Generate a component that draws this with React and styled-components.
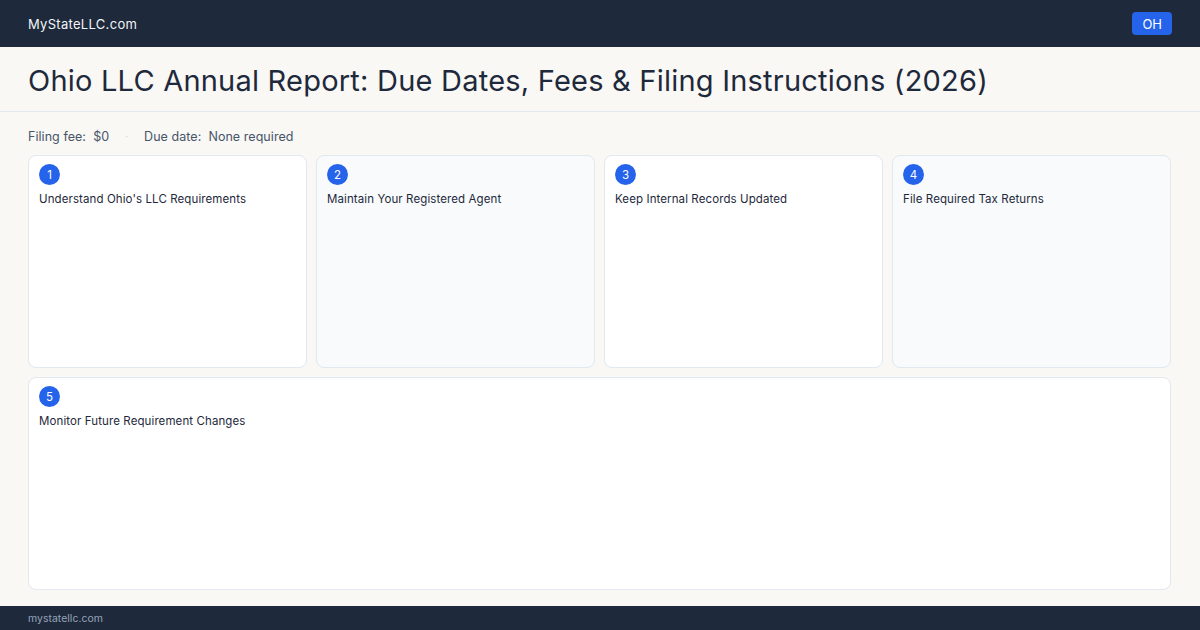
import styled, { createGlobalStyle } from "styled-components";

const Global = createGlobalStyle`
  * { box-sizing: border-box; }
  html, body { margin: 0; padding: 0; }
  body {
    font-family: Inter, "Noto Sans", sans-serif;
    background: #f9f8f5;
    color: #1e293b;
  }
`;

const Page = styled.div`
  width: 1200px;
  height: 630px;
  display: flex;
  flex-direction: column;
  overflow: hidden;
`;

const TopBar = styled.header`
  height: 47px;
  flex-shrink: 0;
  background: #1e293b;
  display: flex;
  align-items: center;
  justify-content: space-between;
  padding: 0 28px;
`;

const Brand = styled.div`
  color: #f1f5f9;
  font-size: 13px;
  letter-spacing: 0.3px;
`;

const StateBadge = styled.div`
  background: #2563eb;
  color: #fff;
  font-size: 13px;
  height: 23px;
  padding: 0 10px;
  border-radius: 4px;
  display: flex;
  align-items: center;
`;

const TitleBand = styled.div`
  height: 65px;
  flex-shrink: 0;
  border-bottom: 1px solid #e2e8f0;
  display: flex;
  align-items: center;
  padding: 3px 28px 0;
`;

const Title = styled.h1`
  margin: 0;
  font-size: 29px;
  font-weight: 400;
  letter-spacing: 0.22px;
  color: #1e293b;
`;

const Main = styled.main`
  flex: 1;
  display: flex;
  flex-direction: column;
  gap: 10px;
  padding: 15px 28px 16px;
  min-height: 0;
`;

const Meta = styled.div`
  display: flex;
  align-items: center;
  gap: 16px;
  font-size: 12.5px;
  letter-spacing: 0.05px;
  color: #475569;
  height: 18px;
`;

const Sep = styled.span`
  color: #cbd5e1;
  font-size: 10px;
`;

const Grid = styled.div`
  flex: 1;
  display: grid;
  grid-template-columns: repeat(4, 279px);
  grid-template-rows: 1fr 1fr;
  gap: 9px;
  min-height: 0;
`;

const Card = styled.div`
  background: ${(p) => (p.$alt ? "#f8fafc" : "#ffffff")};
  border: 1px solid #e2e8f0;
  border-radius: 8px;
  padding: 8px 10px;
  grid-column: ${(p) => (p.$wide ? "1 / -1" : "auto")};
`;

const Num = styled.div`
  width: 21px;
  height: 21px;
  border-radius: 50%;
  background: #2563eb;
  color: #fff;
  font-size: 11.5px;
  display: flex;
  align-items: center;
  justify-content: center;
  margin-bottom: 7px;
`;

const CardTitle = styled.div`
  font-size: 11.5px;
  letter-spacing: 0.1px;
  color: #1e293b;
`;

const Footer = styled.footer`
  height: 24px;
  flex-shrink: 0;
  background: #1e293b;
  color: #94a3b8;
  font-size: 10.5px;
  display: flex;
  align-items: center;
  padding: 0 28px;
`;

const steps = [
  "Understand Ohio's LLC Requirements",
  "Maintain Your Registered Agent",
  "Keep Internal Records Updated",
  "File Required Tax Returns",
  "Monitor Future Requirement Changes",
];

export default function App() {
  return (
    <Page>
      <Global />
      <TopBar>
        <Brand>MyStateLLC.com</Brand>
        <StateBadge>OH</StateBadge>
      </TopBar>
      <TitleBand>
        <Title>Ohio LLC Annual Report: Due Dates, Fees &amp; Filing Instructions (2026)</Title>
      </TitleBand>
      <Main>
        <Meta>
          <span>Filing fee:&nbsp; $0</span>
          <Sep>·</Sep>
          <span>Due date:&nbsp; None required</span>
        </Meta>
        <Grid>
          {steps.map((s, i) => (
            <Card key={s} $alt={i % 2 === 1} $wide={i === 4}>
              <Num>{i + 1}</Num>
              <CardTitle>{s}</CardTitle>
            </Card>
          ))}
        </Grid>
      </Main>
      <Footer>mystatellc.com</Footer>
    </Page>
  );
}
